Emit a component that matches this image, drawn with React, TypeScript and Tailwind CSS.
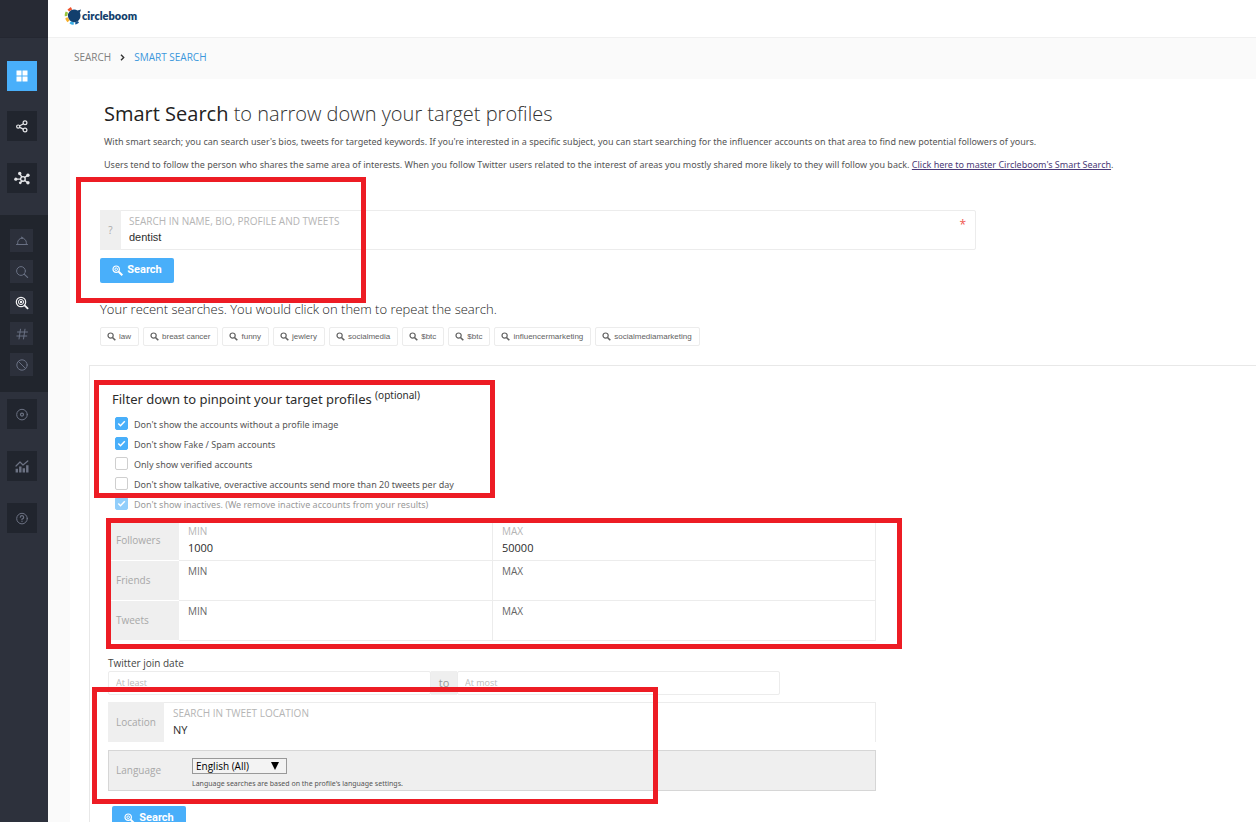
import type { ReactNode } from "react";

function Glyph({ size = 14, children }: { size?: number; children: ReactNode }) {
  return (
    <svg
      width={size}
      height={size}
      viewBox="0 0 14 14"
      fill="none"
      stroke="currentColor"
      strokeWidth="1.2"
      strokeLinecap="round"
      strokeLinejoin="round"
      aria-hidden="true"
    >
      {children}
    </svg>
  );
}

function MainTile({ label, active, bright, children }: { label: string; active?: boolean; bright?: boolean; children: ReactNode }) {
  const tone = active ? "bg-[#49affa] text-white" : bright ? "bg-[#21252e] text-[#e4e5e8]" : "bg-[#21252e] text-[#6c7283]";
  return (
    <a href="#" aria-label={label} className={`flex size-[30px] items-center justify-center ${tone}`}>
      {children}
    </a>
  );
}

function SubTile({ label, bright, children }: { label: string; bright?: boolean; children: ReactNode }) {
  const tone = bright ? "text-[#f2f2f4]" : "text-[#697083]";
  return (
    <a href="#" aria-label={label} className={`flex size-[23px] items-center justify-center bg-[#2c303b] ${tone}`}>
      {children}
    </a>
  );
}

function Sidebar() {
  return (
    <nav className="flex w-12 shrink-0 flex-col bg-[#2d313c]">
      <div className="h-[38px] shrink-0 border-b border-[#242731] bg-[#272a34]" />
      <div className="flex flex-col px-[7px] pt-[23px] pb-[22px]">
        <MainTile label="Dashboard" active>
          <svg width="12" height="12" viewBox="0 0 12 12" fill="currentColor" aria-hidden="true">
            <path d="M.5.5h5v5h-5zM6.5.5h5v5h-5zM.5 6.5h5v5h-5zM6.5 6.5h5v5h-5z" />
          </svg>
        </MainTile>
        <div className="mt-5">
          <MainTile label="Share" bright>
            <Glyph>
              <circle cx="3.2" cy="7.6" r="1.6" />
              <circle cx="10" cy="3.8" r="1.9" />
              <circle cx="10" cy="11" r="1.9" />
              <path d="M4.8 6.8 8.2 4.9M4.8 8.4l3.4 1.7" />
            </Glyph>
          </MainTile>
        </div>
        <div className="mt-[22px]">
          <MainTile label="Network" bright>
            <Glyph size={16}>
              <circle cx="7.8" cy="7.8" r="2" />
              <path d="M2 8h3.6M6.8 6 5.4 3.8M9.4 6.4l2-1.2M9.4 9.2l2 1.5M6.9 9.5l-.8 1.2" />
              <g fill="currentColor" stroke="none">
                <circle cx="1.6" cy="8" r="1.4" />
                <circle cx="5" cy="3" r="1.5" />
                <circle cx="12.2" cy="4.6" r="1.5" />
                <circle cx="12.2" cy="11.2" r="1.5" />
                <circle cx="5.5" cy="11.2" r="1.2" />
              </g>
            </Glyph>
          </MainTile>
        </div>
      </div>
      <div className="flex flex-col gap-2 bg-[#21252d] px-[10px] pt-[14px] pb-4">
        <SubTile label="Overview">
          <Glyph>
            <path d="M1.5 10.5h11M2.7 10.3V8.6a4.3 4.3 0 0 1 8.6 0v1.7M6 3.8l1-1 1 1" strokeWidth="1" />
          </Glyph>
        </SubTile>
        <SubTile label="Search">
          <Glyph>
            <circle cx="6" cy="6" r="4.4" strokeWidth="1" />
            <path d="m9.4 9.4 3.2 3" />
          </Glyph>
        </SubTile>
        <SubTile label="Smart search" bright>
          <Glyph>
            <circle cx="6" cy="6" r="4.7" />
            <circle cx="6" cy="6" r="2.6" strokeWidth="1" />
            <circle cx="6" cy="6" r="0.6" />
            <path d="m9.6 9.4 3 3" strokeWidth="1.8" />
          </Glyph>
        </SubTile>
        <SubTile label="Hashtag">
          <Glyph>
            <path d="M5.5 2.2 4 12M10 2.2 8.5 12M2.5 5h10M1.8 9h10" strokeWidth="1" />
          </Glyph>
        </SubTile>
        <SubTile label="Blocked">
          <Glyph>
            <circle cx="7" cy="7" r="5.2" strokeWidth="1" />
            <path d="m3.4 3.4 7.2 7.2" strokeWidth="1" />
          </Glyph>
        </SubTile>
      </div>
      <div className="flex flex-col gap-[22px] px-[7px] pt-[7px]">
        <MainTile label="Target">
          <Glyph>
            <circle cx="7" cy="7.6" r="5.3" strokeWidth="1" />
            <circle cx="7" cy="7.6" r="1.5" />
          </Glyph>
        </MainTile>
        <MainTile label="Analytics">
          <Glyph>
            <path d="M1 7 5 3l3 3 4.8-4" />
            <path d="M1.8 9.8v3.7M5.3 7.4v6.1M8.8 9.2v4.3M12.3 6.2v7.3" strokeWidth="2.4" strokeLinecap="butt" />
          </Glyph>
        </MainTile>
        <MainTile label="Help">
          <Glyph>
            <circle cx="7" cy="7.6" r="5.3" strokeWidth="1" />
            <path d="M5.3 6.2A1.7 1.7 0 1 1 7 8v.7M7 10.4v.1" />
          </Glyph>
        </MainTile>
      </div>
    </nav>
  );
}

function Logo() {
  return (
    <a href="#" className="flex items-center text-[#123f6d]">
      <svg width="18" height="20" viewBox="0 0 18 20" aria-hidden="true">
        <path d="M3.5 3.6 6.8 1l1.4 2.4-3.2 2z" fill="#f0532d" />
        <path d="M1.8 5.4l2.2 1.2-.8 3.4-2.4.2c-.2-1.8.1-3.4 1-4.8z" fill="#9bc53d" />
        <path d="M1.4 12l2.3-.7 1.8 3.2-2 1.7C2.3 15 1.6 13.6 1.4 12z" fill="#f7b02c" />
        <path d="M5.5 17.2l1.5-2 2.8 1-.1 2.6c-1.6 0-3-.6-4.2-1.6z" fill="#37aee6" />
        <path d="M11.2 16.2l2.6-1.2 1.2 1.5c-1 .9-2.3 1.7-3.7 2z" fill="#15548f" />
        <path d="M10 3.6c1.3 0 2.5.4 3.5 1L17 3.5l-1.2 3.2c.5.9.7 1.9.7 3A6.3 6.3 0 1 1 10 3.6z" fill="#123f6d" />
      </svg>
      <span className="font-[Lato,'Open_Sans',sans-serif] text-[11px] leading-4 font-extrabold">circleboom</span>
    </a>
  );
}

/* Red frame drawn over a group of controls; the caller sets its extent. */
function Callout({ extent }: { extent: string }) {
  return <div aria-hidden="true" className={`pointer-events-none absolute z-10 border-5 border-[#ed1c24] ${extent}`} />;
}

function SearchButton() {
  return (
    <button
      type="button"
      className="flex h-[25px] w-[74px] items-center justify-center gap-1 rounded-xs bg-[#49affa] font-[Roboto,'Liberation_Sans',sans-serif] text-[11px] font-bold text-white"
    >
      <svg width="11" height="11" viewBox="0 0 11 11" fill="none" stroke="currentColor" aria-hidden="true">
        <circle cx="4.2" cy="4.2" r="3.2" strokeWidth="1.2" />
        <circle cx="4.2" cy="4.2" r="1.3" strokeWidth="1" />
        <path d="m6.7 6.7 3.6 3.6" strokeWidth="2" />
      </svg>
      Search
    </button>
  );
}

const recent = ["law", "breast cancer", "funny", "jewlery", "socialmedia", "$btc", "$btc", "influencermarketing", "socialmediamarketing"];

function RecentChip({ term }: { term: string }) {
  return (
    <button
      type="button"
      className="flex h-[19px] items-center gap-[3px] rounded-xs border border-[#ececec] pr-[7px] pl-[6px] font-['Liberation_Sans',sans-serif] text-[8px] leading-3 text-[#626262]"
    >
      <svg width="9" height="9" viewBox="0 0 9 9" fill="none" stroke="currentColor" aria-hidden="true">
        <circle cx="3.6" cy="3.6" r="2.6" strokeWidth="1.2" />
        <path d="m5.5 5.5 2.8 2.8" strokeWidth="1.6" />
      </svg>
      {term}
    </button>
  );
}

const toggles = [
  { id: "no-image", text: "Don't show the accounts without a profile image", on: true, off: false },
  { id: "no-fake", text: "Don't show Fake / Spam accounts", on: true, off: false },
  { id: "verified", text: "Only show verified accounts", on: false, off: false },
  { id: "talkative", text: "Don't show talkative, overactive accounts send more than 20 tweets per day", on: false, off: false },
  { id: "inactive", text: "Don't show inactives. (We remove inactive accounts from your results)", on: true, off: true },
];

function Toggle({ id, text, on, off }: (typeof toggles)[number]) {
  return (
    <div className={`flex h-5 items-start gap-[6px] ${off ? "opacity-60" : ""}`}>
      <span className="grid">
        <input
          id={id}
          type="checkbox"
          defaultChecked={on}
          disabled={off}
          className="peer col-start-1 row-start-1 size-[13px] appearance-none rounded-xs border border-[#cfcfcf] bg-white checked:border-[#49affa] checked:bg-[#49affa]"
        />
        <svg
          viewBox="0 0 13 13"
          className="pointer-events-none invisible col-start-1 row-start-1 size-[13px] peer-checked:visible"
          fill="none"
          stroke="#fff"
          strokeWidth="1.5"
          aria-hidden="true"
        >
          <path d="m3.3 6.5 2.2 2.2 4.3-4.4" />
        </svg>
      </span>
      <label htmlFor={id} className="font-['Noto_Sans',sans-serif] text-[9px] leading-4 text-[#555]">
        {text}
      </label>
    </div>
  );
}

function FloatField({ id, label, value, edge }: { id: string; label: string; value?: string; edge: string }) {
  return (
    <div className={`flex h-10 min-w-0 flex-col border-[#ececec] px-[9px] pt-1 ${edge}`}>
      <label htmlFor={id} className={`text-[10px] leading-3 ${value ? "text-[#b5b5b5]" : "text-[#666]"}`}>
        {label}
      </label>
      <input id={id} defaultValue={value} className="h-5 w-full bg-transparent text-[11px] text-[#2c2c2c] outline-none" />
    </div>
  );
}

const ranges = [
  { name: "Followers", min: "1000", max: "50000" },
  { name: "Friends", min: undefined, max: undefined },
  { name: "Tweets", min: undefined, max: undefined },
];

export default function App() {
  return (
    <div className="flex h-screen overflow-hidden bg-[#fafafa] font-['Open_Sans','Noto_Sans',sans-serif] text-[#333]">
      <Sidebar />
      <div className="flex min-w-0 grow flex-col">
        <header className="flex h-[38px] shrink-0 items-center border-b border-[#f0f0f0] bg-white px-4 pb-[6px]">
          <Logo />
        </header>
        <main className="min-h-0 grow overflow-x-hidden overflow-y-auto [scrollbar-width:none]">
          <nav aria-label="Breadcrumb" className="flex h-[41px] items-center gap-[9px] pl-[26px] pb-[2px] text-[10px]">
            <a href="#" className="text-[#808080]">SEARCH</a>
            <svg width="5" height="7" viewBox="0 0 5 7" fill="none" stroke="#333" strokeWidth="1.4" aria-hidden="true">
              <path d="m1 .8 2.7 2.7L1 6.2" />
            </svg>
            <a href="#" className="text-[#3b97dc]">SMART SEARCH</a>
          </nav>

          <div className="ml-[22px] bg-white pl-[19px]">
            <section className="pl-[15px] pt-[19px]">
              <h1 className="text-xl leading-8 font-light text-[#333]">
                <span className="font-normal text-[#222]">Smart Search</span> to narrow down your target profiles
              </h1>
              <p className="mt-1 font-['Noto_Sans',sans-serif] text-[9px] leading-4 text-[#555]">
                With smart search; you can search user's bios, tweets for targeted keywords. If you're interested in a specific subject, you can start
                searching for the influencer accounts on that area to find new potential followers of yours.
              </p>
              <p className="mt-[7px] font-['Noto_Sans',sans-serif] text-[9px] leading-4 text-[#555]">
                Users tend to follow the person who shares the same area of interests. When you follow Twitter users related to the interest of areas
                you mostly shared more likely to they will follow you back.{" "}
                <a href="#" className="text-[#4a3a78] underline">Click here to master Circleboom's Smart Search</a>.
              </p>
            </section>

            <section className="relative pt-[37px] pr-4 pl-[11px]">
              <Callout extent="top-1 -left-[13px] h-[126px] w-[290px]" />
              <div className="flex max-w-[876px] rounded-xs border border-[#ececec]">
                <span className="-my-px -ml-px flex w-[21px] items-center justify-center bg-[#efefef] text-[10px] text-[#aaa]">?</span>
                <div className="flex h-[38px] grow flex-col pt-1 pl-2">
                  <label htmlFor="keyword" className="text-[10px] leading-3 text-[#b5b5b5]">
                    SEARCH IN NAME, BIO, PROFILE AND TWEETS
                  </label>
                  <input
                    id="keyword"
                    defaultValue="dentist"
                    className="h-5 w-full bg-transparent font-['Liberation_Sans',sans-serif] text-[11px] text-[#2c2c2c] outline-none"
                  />
                </div>
                <span className="pt-[6px] pr-[9px] text-xs leading-4 text-[#f0564f]">*</span>
              </div>
              <div className="mt-2">
                <SearchButton />
              </div>
            </section>

            <section className="pt-4 pl-[11px]">
              <h2 className="text-[13px] leading-5 font-light text-[#222]">
                Your recent searches. You would click on them to repeat the search.
              </h2>
              <div className="mt-2 flex flex-wrap gap-1">
                {recent.map((term, i) => (
                  <RecentChip key={i} term={term} />
                ))}
              </div>
            </section>

            <form className="mt-[19px] border-t border-l border-[#e8e8e8] pt-[14px] pb-10 pl-[18px]">
              <section className="relative pt-[7px]">
                <Callout extent="top-0 -left-[14px] h-[118px] w-[401px]" />
                <h2 className="pl-1 font-['Noto_Sans',sans-serif] text-[13px] leading-6 text-[#2c2c2c]">
                  Filter down to pinpoint your target profiles <sup className="text-[10px]">(optional)</sup>
                </h2>
                <div className="flex flex-col pt-[6px] pl-[7px]">
                  {toggles.map((t) => (
                    <Toggle key={t.id} {...t} />
                  ))}
                </div>
              </section>

              <section className="relative mt-1 pl-[2px]">
                <Callout extent="-top-[3px] -left-[2px] h-[131px] w-[796px]" />
                <div className="max-w-[766px]">
                  {ranges.map((r) => (
                    <div key={r.name} className="grid h-10 grid-cols-[69px_313fr_384fr]">
                      <span className="flex items-center border-b border-white bg-[#efefef] pl-[6px] text-[10px] text-[#a8a8a8]">{r.name}</span>
                      <FloatField id={`${r.name}-min`} label="MIN" value={r.min} edge="border-b" />
                      <FloatField id={`${r.name}-max`} label="MAX" value={r.max} edge="border-b border-x" />
                    </div>
                  ))}
                </div>
              </section>

              <section className="mt-[14px]">
                <label htmlFor="joined-from" className="block text-[10px] leading-4 text-[#444]">Twitter join date</label>
                <div className="flex h-6 max-w-[672px] text-[9px]">
                  <input
                    id="joined-from"
                    placeholder="At least"
                    className="min-w-0 flex-1 rounded-xs border border-[#ececec] bg-white px-[7px] outline-none placeholder:text-[#bbb]"
                  />
                  <label htmlFor="joined-to" className="flex w-[26px] items-center justify-center bg-[#efefef] text-[11px] text-[#999]">to</label>
                  <input
                    id="joined-to"
                    placeholder="At most"
                    className="min-w-0 flex-1 rounded-xs border border-[#ececec] bg-white px-[7px] outline-none placeholder:text-[#bbb]"
                  />
                </div>
              </section>

              <section className="relative pt-[7px]">
                <Callout extent="-top-2 -left-4 h-[117px] w-[566px]" />
                <div className="grid h-10 max-w-[768px] grid-cols-[56px_1fr]">
                  <span className="flex items-center bg-[#efefef] pl-2 text-[10px] text-[#a8a8a8]">Location</span>
                  <FloatField id="location" label="SEARCH IN TWEET LOCATION" value="NY" edge="border-t border-r" />
                </div>
                <div className="mt-2 grid h-[41px] max-w-[768px] grid-cols-[83px_1fr] border border-[#d6d6d6] bg-[#efefef]">
                  <label htmlFor="language" className="flex items-center pl-[7px] text-[10px] text-[#a8a8a8]">Language</label>
                  <div className="pt-[7px]">
                    <div className="grid w-[95px]">
                      <select
                        id="language"
                        className="col-start-1 row-start-1 h-4 w-full appearance-none border border-[#999] bg-[#f3f3f3] pl-[3px] text-[10px] leading-[14px] text-black"
                      >
                        <option>English (All)</option>
                      </select>
                      <svg width="8" height="8" viewBox="0 0 8 8" className="pointer-events-none col-start-1 row-start-1 mr-2 self-center justify-self-end" aria-hidden="true">
                        <path d="M0 0h8L4 8z" fill="#000" />
                      </svg>
                    </div>
                    <p className="mt-1 font-['Noto_Sans',sans-serif] text-[7px] leading-3 text-[#555]">
                      Language searches are based on the profile's language settings.
                    </p>
                  </div>
                </div>
              </section>

              <div className="mt-[15px] pl-1">
                <SearchButton />
              </div>
            </form>
          </div>
        </main>
      </div>
    </div>
  );
}
